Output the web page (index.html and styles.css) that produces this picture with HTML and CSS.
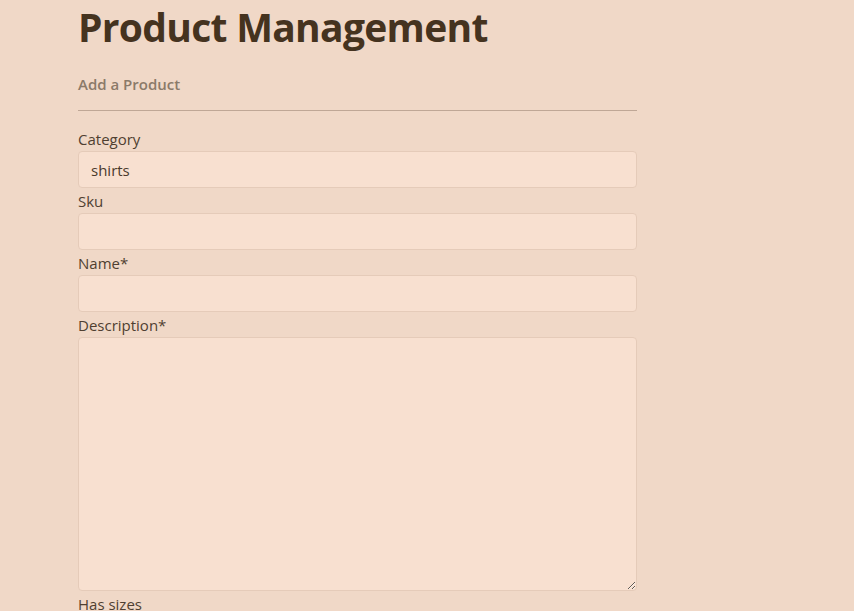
FILE: index.html
```html
<!DOCTYPE html>
<html lang="en">
<head>
<meta charset="utf-8">
<title>Product Management</title>
<link rel="stylesheet" href="styles.css">
</head>
<body>
<main class="page">
  <h1 class="title">Product Management</h1>
  <h2 class="subtitle">Add a Product</h2>
  <hr class="rule">
  <form class="form">
    <label class="label" for="category">Category</label>
    <input class="field" id="category" type="text" value="shirts">
    <label class="label" for="sku">Sku</label>
    <input class="field" id="sku" type="text">
    <label class="label" for="name">Name*</label>
    <input class="field" id="name" type="text">
    <label class="label" for="desc">Description*</label>
    <textarea class="field area" id="desc"></textarea>
    <label class="label" for="sizes">Has sizes</label>
  </form>
</main>
</body>
</html>
```
FILE: styles.css
```css
html, body {
  margin: 0;
  padding: 0;
  background: #f0d8c7;
  overflow: hidden;
}
body {
  font-family: "Open Sans", "Noto Sans", sans-serif;
  color: #4a3a2c;
}
.page {
  width: 559px;
  margin-left: 78px;
  padding-top: 4px;
}
.title {
  margin: 0;
  font-size: 39px;
  line-height: 46px;
  font-weight: 700;
  letter-spacing: -0.7px;
  color: #45331f;
}
.subtitle {
  margin: 24px 0 0;
  font-size: 15px;
  line-height: 20px;
  font-weight: 600;
  color: #8b7a69;
}
.rule {
  margin: 16px 0 17px;
  border: 0;
  border-top: 1px solid #bfa796;
}
.form {
  display: flex;
  flex-direction: column;
}
.label {
  font-size: 15px;
  line-height: 22px;
  padding-bottom: 1px;
  color: #4f3f31;
}
.field {
  box-sizing: border-box;
  height: 37px;
  margin: 0 0 2px;
  padding: 0 12px;
  background: #f8e0d0;
  border: 1px solid #e5cbb9;
  border-radius: 4px;
  font-family: inherit;
  font-size: 15px;
  color: #4a3a2c;
  outline: none;
}
.area {
  height: 254px;
  resize: vertical;
}
```
